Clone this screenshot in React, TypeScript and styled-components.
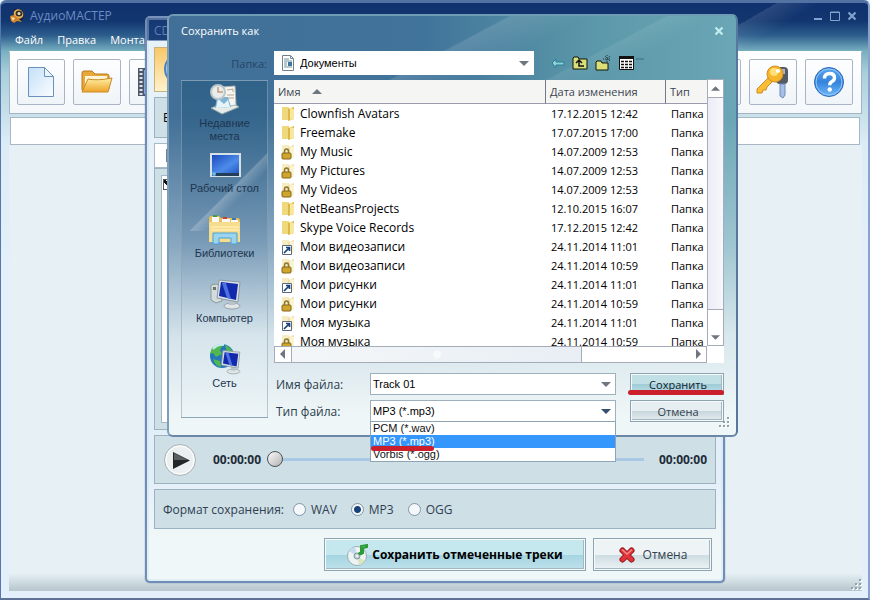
import React from "react";
import styled, { createGlobalStyle, css } from "styled-components";

const Global = createGlobalStyle`
  * { box-sizing: border-box; }
  body { margin: 0; background: #e4f0fa; }
  body, button, input, select, table { font-family: "Open Sans", "Noto Sans", sans-serif; font-size: 12px; }
`;

const AppWindow = styled.div`
  position: relative;
  display: flex;
  flex-direction: column;
  min-height: 100vh;
  padding: 0 6px 7px 8px;
  overflow: hidden;
  border: 1px solid #5577ae;
  border-top: 3px solid #5272a4;
  border-right: 2px solid #8ba0cc;
  border-bottom: 2px solid #5f7296;
  border-radius: 6px 6px 0 0;
  background:
    linear-gradient(150deg, transparent 0 46%, rgba(255,255,255,.1) 46% 47%, transparent 60%) right top / 240px 48px no-repeat,
    linear-gradient(#10316f 0, #12366f 18px, #2b5c8c 32px, #78afc0 48px, #a9d0da 70px, #dcecf6 140px, #e3f0fb 260px);
`;
const TitleBar = styled.header`
  display: flex;
  align-items: center;
  gap: 5px;
  height: 25px;
  padding-right: 3px;
  color: #6b8cc4;
`;
const WindowTitle = styled.span`flex: 1;`;
const CaptionButton = styled.button`
  display: flex;
  width: 12px;
  padding: 0;
  border: 0;
  background: none;
  color: #83a2cd;
`;
const MenuBar = styled.nav`
  display: flex;
  gap: 14px;
  height: 23px;
  padding-left: 6px;
  align-items: center;
`;
const MenuItem = styled.button`
  padding: 0;
  border: 0;
  background: none;
  color: #fff;
  font-size: 11px;
`;
const Toolbar = styled.div`
  display: flex;
  gap: 8px;
  padding: 7px 8px 8px 7px;
  border: 1px solid #a5b4c2;
  border-top-color: #fff;
  background: linear-gradient(#fff, #f4f8fb);
`;
const ToolButton = styled.button`
  display: flex;
  align-items: center;
  justify-content: center;
  width: 48px;
  height: 46px;
  padding: 0;
  border: 1px solid #aab4c4;
  border-radius: 2px;
  background: linear-gradient(#fdfeff, #eff4f8);
`;
const Spacer = styled.div`flex: 1;`;
const TrackBar = styled.div`
  height: 28px;
  margin: 3px 2px 0 1px;
  border: 1px solid #a9b6c3;
  background: #fff;
`;
const Workspace = styled.main`
  flex: 1;
  background: #e7f1f5;
`;
const StatusBar = styled.footer`
  display: flex;
  justify-content: flex-end;
  align-items: flex-end;
  height: 18px;
  background: linear-gradient(#e7f1f5, #b6c6cc);
`;

const RipDialog = styled.section`
  position: absolute;
  left: 144px;
  right: 143px;
  top: 13px;
  padding: 0 7px 10px;
  border: 2px solid #6f8db6;
  border-top-color: #7892bb;
  border-radius: 5px;
  background: linear-gradient(#153873 0, #1b4078 22px, #e6f1f8 23px, #e3eff8 460px, #f0f7f8 520px);
  box-shadow: inset 0 0 0 2px rgba(200, 222, 240, .35), 0 0 1px #24446e;
`;
const RipTitle = styled.h2`
  height: 25px;
  margin: 0;
  color: #5d80b8;
  font-size: 12px;
  font-weight: 400;
  line-height: 25px;
`;
const Banner = styled.div`
  height: 45px;
  margin-top: 4px;
  border: 1px solid #c8b27c;
  background: linear-gradient(#f8c868, #fff2cc);
`;
const panel = css`
  border: 1px solid #9bb2c3;
  background: #cfdfe6;
`;
const DrivePanel = styled.div`
  ${panel}
  height: 41px;
  margin-top: 5px;
  padding: 11px 8px;
`;
const TabStrip = styled.div`
  height: 25px;
  margin-top: 5px;
  padding: 5px 11px;
  border: 1px solid #a9bac6;
  background: #fff;
`;
const TrackList = styled.div`
  ${panel}
  height: 262px;
  padding: 6px;
`;
const TrackSheet = styled.div`
  height: 248px;
  border: 1px solid #a6b7c4;
  background: #fff;
`;
const Check = styled.input`
  appearance: none;
  display: block;
  width: 11px;
  height: 11px;
  margin: 3px 1px;
  border: 1px solid #555;
  background: #fff linear-gradient(45deg, transparent 35%, #111 36% 60%, transparent 61%);
`;
const Player = styled.div`
  ${panel}
  display: flex;
  align-items: center;
  height: 49px;
  margin-top: 5px;
  padding: 0 8px;
  color: #1d2c38;
  font-weight: 700;
`;
const PlayButton = styled.button`
  display: flex;
  width: 34px;
  height: 34px;
  margin-right: 16px;
  padding: 0;
  border: 0;
  background: none;
`;
const Seek = styled.input`
  flex: 1;
  height: 18px;
  margin: 0 15px 0 6px;
  appearance: none;
  background: none;
  &::-webkit-slider-runnable-track {
    height: 3px;
    background: #a9c8e3;
  }
  &::-webkit-slider-thumb {
    appearance: none;
    width: 16px;
    height: 16px;
    margin-top: -7px;
    border: 1px solid #4d5255;
    border-radius: 50%;
    background: linear-gradient(135deg, #fafafa, #b3b3b3);
  }
`;
const FormatGroup = styled.div`
  ${panel}
  display: flex;
  align-items: center;
  height: 40px;
  margin-top: 5px;
  padding: 0 8px;
  color: #2e4152;
`;
const FormatTitle = styled.span`
  margin-right: 9px;
`;
const RadioLabel = styled.label`
  display: flex;
  align-items: center;
  gap: 5px;
  margin-right: 14px;
`;
const Radio = styled.input`
  appearance: none;
  width: 13px;
  height: 13px;
  margin: 0;
  border: 1px solid #7f96a8;
  border-radius: 50%;
  background: #f4f8fa;
  &:checked { background: radial-gradient(circle, #16437c 0 3px, #f4f8fa 4px); }
`;
const RipActions = styled.div`
  display: flex;
  justify-content: flex-end;
  gap: 7px;
  padding: 9px 4px 0 0;
`;
const raised = css`
  border: 1px solid #8fa4b1;
  box-shadow: inset 0 0 0 1px #f4fafc, inset -2px -2px 0 #a5b8c2;
`;
const ActionButton = styled.button<{ $primary?: boolean }>`
  ${raised}
  display: flex;
  align-items: center;
  justify-content: center;
  gap: ${p => (p.$primary ? 3 : 7)}px;
  width: ${p => (p.$primary ? 262 : 119)}px;
  height: 33px;
  padding: 0;
  background: ${p => p.$primary
    ? "linear-gradient(#c5e8ef 0 50%, #a4d5e1 51%, #bfe1eb)"
    : "linear-gradient(#eef4f6 0 50%, #cddce1 51%, #edf4f6)"};
  color: ${p => (p.$primary ? "#000" : "#33424d")};
  font-weight: ${p => (p.$primary ? 700 : 400)};
`;

const SaveDialog = styled.section`
  position: absolute;
  left: 166px;
  right: 130px;
  top: 11px;
  display: flex;
  flex-direction: column;
  padding: 0 12px 13px 11px;
  border: 2px solid #7e9fba;
  border-top-color: #6e9cb4;
  border-right-color: #57789e;
  border-bottom-color: #6b87a8;
  border-radius: 6px;
  background:
    linear-gradient(152deg, transparent 0 22%, rgba(255,255,255,.12) 22.5%, transparent 31%, transparent 40%, rgba(255,255,255,.08) 40.5%, transparent 46%) right top / 420px 240px no-repeat,
    linear-gradient(rgba(231,241,246,0) 0, rgba(231,241,246,0) 100px, rgba(225,238,243,.45) 230px, rgba(228,239,243,.9) 320px, #eff6f7 400px),
    linear-gradient(90deg, #416f97 0, #41749a 45%, #5b98a9 75%, #6aa6b5);
`;
const SaveTitle = styled.header`
  display: flex;
  align-items: center;
  height: 35px;
  padding: 0 0 6px 1px;
  color: #fff;
  font-size: 11px;
`;
const CloseButton = styled(CaptionButton)`
  margin-right: -2px;
  color: #c1edf0;
`;
const FolderRow = styled.div`
  display: flex;
  align-items: center;
  gap: 7px;
  height: 24px;
  margin-bottom: 5px;
`;
const FolderLabel = styled.label`
  width: 87px;
  color: #254567;
  font-size: 11px;
  text-align: right;
`;
const SelectBox = styled.div<{ $folder?: boolean }>`
  position: relative;
  display: flex;
  flex: 1;
  align-items: center;
  gap: 4px;
  height: ${p => (p.$folder ? 24 : 22)}px;
  border: 1px solid ${p => (p.$folder ? "#fff" : "#9fb0bd")};
  background: #fff;
  padding: 0 4px 0 ${p => (p.$folder ? 5 : 2)}px;
`;
const fieldText = css`
  flex: 1;
  min-width: 0;
  padding: 0;
  border: 0;
  outline: 0;
  appearance: none;
  background: none;
  color: #000;
  font-family: "Liberation Sans", sans-serif;
  font-size: 11px;
`;
const Select = styled.select`${fieldText}`;
const FileInput = styled.input`${fieldText}`;
const FolderTools = styled.div`
  display: flex;
  gap: 7px;
  width: 183px;
  padding-left: 10px;
`;
const IconButton = styled.button`
  display: flex;
  padding: 0;
  border: 0;
  background: none;
`;
const SaveBody = styled.div`
  display: flex;
  gap: 6px;
`;
const Places = styled.nav`
  width: 87px;
  height: 338px;
  margin-left: 1px;
  padding-top: 2px;
  border: 1px solid rgba(143, 166, 184, .6);
  background:
    linear-gradient(135deg, transparent 66%, rgba(255,255,255,.22) 67%, transparent 74%) left top / 87px 150px no-repeat,
    linear-gradient(rgba(33,85,122,.5), rgba(70,110,150,.25) 45%, rgba(225,238,243,.2) 75%);
`;
const Place = styled.button`
  display: flex;
  flex-direction: column;
  align-items: center;
  gap: 2px;
  width: 100%;
  height: 65px;
  padding: 0 5px;
  border: 0;
  background: none;
  color: #1d3550;
  font-family: "Liberation Sans", sans-serif;
  font-size: 11px;
  line-height: 13px;
`;
const SaveMain = styled.div`
  flex: 1;
  min-width: 0;
`;
const FileView = styled.div`
  display: grid;
  grid-template-columns: minmax(0, 1fr) 17px;
  grid-template-rows: 266px 17px;
  background: #fff;
`;
const FileViewport = styled.div`overflow: hidden;`;
const FileTable = styled.table`
  width: 520px;
  table-layout: fixed;
  border-collapse: separate;
  border-spacing: 0;
  color: #000;
  white-space: nowrap;
`;
const HeadCell = styled.th<{ $w: number }>`
  width: ${p => p.$w}px;
  height: 24px;
  padding: 0 4px;
  border-bottom: 1px solid #9a9cae;
  border-right: 1px solid #77778c;
  background: #f5f5f3;
  color: #3c4450;
  font-size: 11px;
  font-weight: 400;
  text-align: left;
`;
const SortLabel = styled.span`
  display: flex;
  align-items: center;
  gap: 11px;
`;
const Cell = styled.td<{ $small?: boolean }>`
  height: 19px;
  padding: 0 5px 0 ${p => (p.$small ? 5 : 7)}px;
  font-size: ${p => (p.$small ? 11 : 12)}px;
  line-height: 18px;
`;
const FileName = styled.span`
  display: flex;
  align-items: center;
  gap: 3px;
`;
const VScroll = styled.div`
  display: flex;
  flex-direction: column;
  justify-content: space-between;
  border: 1px solid #a4acc0;
  border-top: 0;
  background: linear-gradient(90deg, #e9edf5, #f7f8fc);
`;
const HScroll = styled.div`
  display: flex;
  justify-content: space-between;
  border: 1px solid #a4acb8;
  background: radial-gradient(circle at 162px 50%, rgba(255,255,255,.6) 0 3px, transparent 5px), linear-gradient(90deg, #f4f7f9, #e4ebf3);
`;
const ScrollButton = styled.button<{ $w: number; $h: number }>`
  display: flex;
  align-items: flex-end;
  justify-content: flex-end;
  width: ${p => p.$w}px;
  height: ${p => p.$h}px;
  padding: 3px;
  border: 0;
  outline: 1px solid #a4acb8;
  background: #fff;
`;
const FormRows = styled.div`
  display: grid;
  grid-template-columns: 89px minmax(0, 1fr) 94px;
  row-gap: 5px;
  margin-top: 10px;
  align-items: center;
`;
const FieldLabel = styled.label`
  padding-left: 2px;
  color: #2a3d4d;
`;
const FieldCell = styled.div`
  display: flex;
  padding: 0 14px 0 7px;
`;
const DialogButton = styled.button<{ $primary?: boolean }>`
  ${raised}
  position: relative;
  height: 22px;
  padding: 0 0 0 2px;
  background: ${p => p.$primary
    ? "linear-gradient(#c0e0e6 0 50%, #9fccd7 51%, #bcdfe6)"
    : "linear-gradient(#e6eef1 0 50%, #c8d6dc 51%, #e5eef1)"};
  color: ${p => (p.$primary ? "#10202c" : "#33424d")};
  font-size: 11px;
`;
const Options = styled.ul`
  position: absolute;
  left: -1px;
  right: -1px;
  top: 20px;
  margin: 0;
  padding: 0;
  border: 1px solid #8ea5b6;
  background: #fff;
  list-style: none;
  font-family: "Liberation Sans", sans-serif;
  font-size: 11px;
`;
const Option = styled.li<{ $active?: boolean }>`
  height: 13px;
  padding-left: 2px;
  overflow: hidden;
  background: ${p => (p.$active ? "#3596fb" : "#fff")};
  color: ${p => (p.$active ? "#fff" : "#111")};
  line-height: 13px;
`;
const Marker = styled.span<{ $option?: boolean }>`
  position: absolute;
  left: ${p => (p.$option ? 0 : -3)}px;
  top: ${p => (p.$option ? 24 : 16)}px;
  z-index: 1;
  width: ${p => (p.$option ? 63 : 96)}px;
  height: 5px;
  border-radius: 3px;
  background: #cb1f2c;
`;
const GripCorner = styled.div`
  position: absolute;
  right: 6px;
  bottom: 6px;
  display: flex;
`;

const Arrow = ({ dir = "down", color = "#6f7680" }: { dir?: "up" | "down" | "left" | "right"; color?: string }) => {
  const d = { down: "M0 3h10l-5 5z", up: "M0 7h10l-5-5z", left: "M7 0v10l-5-5z", right: "M3 0v10l5-5z" }[dir];
  return <svg width="10" height="10" viewBox="0 0 10 10"><path d={d} fill={color} /></svg>;
};
const Grip = () => (
  <svg width="12" height="12" viewBox="0 0 12 12">
    {[[9, 0], [5, 4], [9, 4], [1, 8], [5, 8], [9, 8]].map(([x, y]) => (
      <g key={`${x}-${y}`}><rect x={x + 1} y={y + 1} width="2" height="2" fill="#fff" /><rect x={x} y={y} width="2" height="2" fill="#93a3ae" /></g>
    ))}
  </svg>
);
const Cross = () => (
  <svg width="10" height="10" viewBox="0 0 10 10"><path d="M1.5 1.5l7 7m0-7l-7 7" stroke="currentColor" strokeWidth="2.2" /></svg>
);
const AppIcon = () => (
  <svg width="16" height="16" viewBox="0 0 16 16">
    <path d="M5 1l8 1 2 5-2 6-5-3-4-4z" fill="#20242c" />
    <ellipse cx="9.5" cy="6" rx="5" ry="4.5" transform="rotate(40 9.5 6)" fill="#eab25c" />
    <ellipse cx="10" cy="5.5" rx="3.4" ry="3" fill="#343026" /><circle cx="10" cy="5.5" r="1.5" fill="#f0e0ba" />
    <path d="M1 8l4-1 4 3 4 4-5-1-3 2-3-2z" fill="#d2842a" /><path d="M2 9l4 1-2 3z" fill="#ffe4a6" />
  </svg>
);
const NewIcon = () => (
  <svg width="28" height="32" viewBox="0 0 28 32">
    <defs><linearGradient id="sheet" x1="0" y1="0" x2="1" y2="1"><stop stopColor="#c4e0f8" /><stop offset="1" stopColor="#fbfdff" /></linearGradient></defs>
    <path d="M1.500 1.500h16l9 9v20h-25z" fill="url(#sheet)" stroke="#6b91bb" /><path d="M17.500 1.500v9h9z" fill="#eaf5ff" stroke="#6b91bb" />
  </svg>
);
const OpenIcon = () => (
  <svg width="34" height="26" viewBox="0 0 34 26">
    <defs><linearGradient id="flap" x2="0" y2="1"><stop stopColor="#fff0a8" /><stop offset="1" stopColor="#eea326" /></linearGradient></defs>
    <path d="M2 21V4q0-2 2-2h8l3 3h12q2 0 2 2v13z" fill="#e8a93c" stroke="#bc7a1c" /><path d="M5 7h22v9H5z" fill="#fff6d8" />
    <path d="M8 10q9 2 24-1l-4 14H2z" fill="url(#flap)" stroke="#cb8a25" />
  </svg>
);
const FilmIcon = () => (
  <svg width="30" height="30" viewBox="0 0 30 30">
    <path d="M0 1h30v28H0z" fill="#4e5868" /><path d="M6 3h18v24H6z" fill="#88b6e3" />
    <path d="M3 2v27M27 2v27" stroke="#dbe4ee" strokeWidth="3" strokeDasharray="2 2" />
  </svg>
);
const KeysIcon = () => (
  <svg width="34" height="34" viewBox="0 0 34 34">
    <rect x="20" y="2" width="12" height="17" rx="4" fill="#545b66" /><rect x="23" y="4" width="6" height="5" fill="#aeb6c2" />
    <path d="M24 19h5v11l-2 3-3-2z" fill="#a6bfea" stroke="#7188b7" />
    <path d="M14 11L1 24v4h5l1-3h3l1-3 6-6z" fill="#f9bd38" stroke="#cf8c20" />
    <circle cx="19" cy="9" r="8" fill="#f7b52c" stroke="#d08e24" /><circle cx="18" cy="7" r="4" fill="#ffe07a" /><circle cx="22" cy="6" r="2" fill="#fff" />
  </svg>
);
const HelpIcon = () => (
  <svg width="32" height="32" viewBox="0 0 32 32">
    <defs><linearGradient id="help" x2="0" y2="1"><stop stopColor="#5ba7ee" /><stop offset=".5" stopColor="#3484dd" /><stop offset="1" stopColor="#6fb8f8" /></linearGradient></defs>
    <circle cx="16" cy="16" r="14.500" fill="url(#help)" stroke="#2a67ba" /><circle cx="16" cy="16" r="13" fill="none" stroke="#93c6f6" />
    <path d="M11.500 12.500q0-5 5-5 5 0 5 4.200 0 2.500-2.800 4-2 1-2 3.500" fill="none" stroke="#fff" strokeWidth="3.400" /><circle cx="16.700" cy="23.500" r="2.200" fill="#fff" />
  </svg>
);
const PlayIcon = () => (
  <svg width="34" height="34" viewBox="0 0 34 34">
    <circle cx="17" cy="17" r="15.500" fill="#eceff0" stroke="#aab5bb" /><circle cx="17" cy="17" r="14" fill="none" stroke="#fff" />
    <path d="M10 9l17 8.500L10 26z" fill="#222627" /><path d="M11 10l14 7H11z" fill="#5b5f61" />
  </svg>
);
const DiscIcon = () => (
  <svg width="22" height="22" viewBox="0 0 22 22">
    <circle cx="10" cy="12" r="9.500" fill="#eef4f2" stroke="#9aaeb2" /><path d="M10 12L2 7a9 9 0 0 1 6-4z" fill="#c2dbef" /><path d="M10 12l8 5a9 9 0 0 1-6 4z" fill="#d7e5c1" />
    <circle cx="10" cy="12" r="3" fill="#bfd2d7" stroke="#8299a0" /><circle cx="10" cy="12" r="1" fill="#fff" />
    <path d="M14 9V2l6-1v2l-4 1v6" fill="none" stroke="#2b9b37" strokeWidth="2" /><ellipse cx="13.500" cy="9.500" rx="2.500" ry="1.800" fill="#2b9b37" />
  </svg>
);
const CancelIcon = () => (
  <svg width="18" height="18" viewBox="0 0 18 18">
    <path d="M4.500 4.500l9 9m0-9l-9 9" stroke="#98141a" strokeWidth="6" strokeLinecap="round" />
    <path d="M4.500 4.500l9 9m0-9l-9 9" stroke="#df353a" strokeWidth="4" strokeLinecap="round" />
    <path d="M4 3.500l5 4.500 5-4.500" stroke="#f28c8c" fill="none" strokeWidth="1.500" />
  </svg>
);
const DocumentIcon = () => (
  <svg width="16" height="16" viewBox="0 0 16 16">
    <path d="M2.500.5h8l3 3v12h-11z" fill="#fff" stroke="#71828f" /><path d="M10.500.5v3h3M4 4h5M4 6h8M4 8h3M4 10h3M4 12h8" fill="none" stroke="#71909f" /><path d="M8 7h4v4H8z" fill="#40769a" />
  </svg>
);
const RecentIcon = () => (
  <svg width="32" height="32" viewBox="0 0 32 32">
    <path d="M2 25l19-7 9 6-17 7z" fill="#e5ebe9" stroke="#94a6aa" /><path d="M13 4l13-1 1 19-12 2z" fill="#f5f6f1" stroke="#aab5b4" />
    <path d="M18 7l6-1v3M18 12h7M18 15h7" stroke="#b9a98a" fill="none" /><path d="M8 14h11l3 10-16 1z" fill="#7fb4d6" /><path d="M9 16l6 5 4-4 2 7-14 1z" fill="#e4f4f8" />
    <circle cx="9" cy="9" r="7" fill="#e9eeed" stroke="#b9c6ca" strokeWidth="2" /><path d="M9 4v5h5" fill="none" stroke="#c79a72" strokeWidth="1.500" />
  </svg>
);
const DesktopIcon = () => (
  <svg width="32" height="32" viewBox="0 0 32 32">
    <defs><linearGradient id="desk" x2="1" y2="1"><stop stopColor="#1b4bbc" /><stop offset=".6" stopColor="#4d8ceb" /><stop offset="1" stopColor="#2259c4" /></linearGradient></defs>
    <rect x="1" y="5" width="31" height="24" fill="#d6e0e7" /><rect x="3" y="7" width="27" height="18" fill="url(#desk)" /><rect x="3" y="25" width="27" height="3" fill="#233e59" /><circle cx="5" cy="26" r="2" fill="#69b8ea" />
  </svg>
);
const LibraryIcon = () => (
  <svg width="34" height="32" viewBox="0 0 34 32">
    <path d="M1 5q0-2 2-2h8l2 2h16q3 0 3 3v20H1z" fill="#e8bf5b" /><path d="M4 4h7v5H4zM14 6h8v4h-8zM23 7h7v3h-7z" fill="#fafafa" /><path d="M5 3h4" stroke="#3f9a4a" strokeWidth="2" /><path d="M15 5h4" stroke="#c2452f" strokeWidth="2" /><path d="M24 6h4" stroke="#3e77b2" strokeWidth="2" />
    <path d="M1 9h31v20H1z" fill="#f5dd8d" /><path d="M3 14h28M3 17h28" stroke="#ffe9a8" strokeWidth="2" />
    <path d="M5 20h24v11h-6v-6H11v6H5z" fill="#9ad4ef" stroke="#4aa1d3" />
  </svg>
);
const Monitor = () => (
  <g><ellipse cx="23" cy="28" rx="8" ry="3" fill="#e2e5e5" stroke="#98a4ad" /><path d="M20 21h6v6h-6z" fill="#b9c2c9" /><path d="M10 2l21 2-2 20-21-4z" fill="#d9e0e4" stroke="#8c9aa6" /><path d="M12 4l17 2-2 16-17-4z" fill="#1229ae" /><path d="M17 5l5 16-4-1-5-15z" fill="#4d71df" /></g>
);
const ComputerIcon = () => (
  <svg width="32" height="32" viewBox="0 0 32 32"><path d="M2 7l5-1 6 2v15l-6 2-5-3z" fill="#d3dbdc" stroke="#8c9999" /><path d="M4 9h3v3H4z" fill="#67756c" /><Monitor /></svg>
);
const NetworkIcon = () => (
  <svg width="32" height="32" viewBox="0 0 32 32">
    <circle cx="13" cy="13" r="12" fill="#2676ba" /><path d="M3 5q7-5 11-3l-3 5 2 4-6 3-3-4-3 1zM4 16l7 2 1 6q-6-1-8-8zM16 2q6 2 8 8l-6-1z" fill="#52b74f" /><path d="M4 6q5-5 11-4" stroke="#c7eef4" fill="none" strokeWidth="2" />
    <g transform="translate(6 6) scale(.8)"><Monitor /></g>
  </svg>
);
const BackIcon = () => <svg width="14" height="16" viewBox="0 0 14 16"><path d="M1 8l4-4v3h8v3H5v3z" fill="#8fd0d8" stroke="#257f92" /></svg>;
const UpIcon = () => <svg width="16" height="16" viewBox="0 0 16 16"><path d="M1 14V3l1-1h4l1 2h8v10z" fill="#d9df79" stroke="#101708" /><path d="M4 8l3-3 3 3M7 6v5h5" fill="none" stroke="#111" strokeWidth="1.500" /></svg>;
const NewFolderIcon = () => <svg width="16" height="16" viewBox="0 0 16 16"><path d="M1 15V7l1-1h4l1 2h6v7z" fill="#d9df79" stroke="#101708" /><path d="M12 0v7M8 4h8M10 1l5 5M15 1l-4 5" stroke="#26322f" strokeDasharray="1 1" /></svg>;
const ViewIcon = () => (
  <svg width="26" height="16" viewBox="0 0 26 16">
    <path d="M1.500 1.500h14v13h-14z" fill="#fff" stroke="#111" /><path d="M1 2.500h15" stroke="#111" strokeWidth="3" />
    <path d="M3 6.500h11M3 9.500h11M3 12.500h11" stroke="#111" strokeWidth="1.500" strokeDasharray="3 1" /><path d="M18 4h8" stroke="#456b7b" />
  </svg>
);

type Kind = "folder" | "lock" | "link";
const FileIcon = ({ kind }: { kind: Kind }) => (
  <svg width="16" height="16" viewBox="0 0 16 16">
    <g opacity={kind === "folder" ? 1 : 0.45}><path d="M1 1h7v13H1z" fill="#efd97c" /><path d="M7 3l6-2v12l-6 2z" fill="#dcb848" /><path d="M9 2l4 1v10l-4 1z" fill="#f8e89f" /></g>
    {kind === "lock" && <g><path d="M3.500 10V7.500q0-2.500 2-2.500t2 2.500V10" fill="none" stroke="#8d7830" strokeWidth="1.500" /><rect x="1" y="9" width="9" height="6" rx="1" fill="#cfa52d" stroke="#80661c" /></g>}
    {kind === "link" && <g><path d="M1.500 6.500h9v9h-9z" fill="#fff" stroke="#586a82" /><path d="M3 14l5-5M5 8.500h3.500V12" fill="none" stroke="#1a407b" strokeWidth="1.700" /></g>}
  </svg>
);

const files: { name: string; date: string; kind: Kind }[] = [
  { name: "Clownfish Avatars", date: "17.12.2015 12:42", kind: "folder" },
  { name: "Freemake", date: "17.07.2015 17:00", kind: "folder" },
  { name: "My Music", date: "14.07.2009 12:53", kind: "lock" },
  { name: "My Pictures", date: "14.07.2009 12:53", kind: "lock" },
  { name: "My Videos", date: "14.07.2009 12:53", kind: "lock" },
  { name: "NetBeansProjects", date: "12.10.2015 16:07", kind: "folder" },
  { name: "Skype Voice Records", date: "17.12.2015 12:42", kind: "folder" },
  { name: "Мои видеозаписи", date: "24.11.2014 11:01", kind: "link" },
  { name: "Мои видеозаписи", date: "24.11.2014 10:59", kind: "lock" },
  { name: "Мои рисунки", date: "24.11.2014 11:01", kind: "link" },
  { name: "Мои рисунки", date: "24.11.2014 10:59", kind: "lock" },
  { name: "Моя музыка", date: "24.11.2014 11:01", kind: "link" },
  { name: "Моя музыка", date: "24.11.2014 10:59", kind: "lock" },
];
const places = [
  { label: "Недавние места", icon: <RecentIcon /> },
  { label: "Рабочий стол", icon: <DesktopIcon /> },
  { label: "Библиотеки", icon: <LibraryIcon /> },
  { label: "Компьютер", icon: <ComputerIcon /> },
  { label: "Сеть", icon: <NetworkIcon /> },
];

export default function App() {
  return (
    <AppWindow>
      <Global />
      <TitleBar>
        <AppIcon />
        <WindowTitle>АудиоМАСТЕР</WindowTitle>
        <CaptionButton aria-label="Свернуть"><svg width="10" height="10" viewBox="0 0 10 10"><path d="M1 8h8" stroke="currentColor" strokeWidth="2" /></svg></CaptionButton>
        <CaptionButton aria-label="Развернуть"><svg width="10" height="10" viewBox="0 0 10 10"><path d="M.5 1v8.500h9V1zM0 1.500h10" fill="none" stroke="currentColor" /></svg></CaptionButton>
        <CaptionButton aria-label="Закрыть"><Cross /></CaptionButton>
      </TitleBar>
      <MenuBar>
        <MenuItem>Файл</MenuItem><MenuItem>Правка</MenuItem><MenuItem>Монтаж</MenuItem>
      </MenuBar>
      <Toolbar>
        <ToolButton aria-label="Новый"><NewIcon /></ToolButton>
        <ToolButton aria-label="Открыть"><OpenIcon /></ToolButton>
        <ToolButton aria-label="Видео"><FilmIcon /></ToolButton>
        <Spacer />
        <ToolButton aria-label="Инструмент" />
        <ToolButton aria-label="Регистрация"><KeysIcon /></ToolButton>
        <ToolButton aria-label="Справка"><HelpIcon /></ToolButton>
      </Toolbar>
      <TrackBar />
      <Workspace />
      <StatusBar><Grip /></StatusBar>

      <RipDialog>
        <RipTitle>CD</RipTitle>
        <Banner><svg width="40" height="43" viewBox="0 0 40 43"><circle cx="25" cy="21" r="15" fill="#9ecbf0" stroke="#4b83bc" strokeWidth="2" /></svg></Banner>
        <DrivePanel>В</DrivePanel>
        <TabStrip><svg width="14" height="14" viewBox="0 0 14 14"><path d="M0 0h14v13H0z" fill="#6f7f95" /></svg></TabStrip>
        <TrackList><TrackSheet><Check type="checkbox" defaultChecked aria-label="Track 01" /></TrackSheet></TrackList>
        <Player>
          <PlayButton aria-label="Воспроизвести"><PlayIcon /></PlayButton>
          <span>00:00:00</span>
          <Seek type="range" min="0" max="100" defaultValue="0" aria-label="Позиция" />
          <span>00:00:00</span>
        </Player>
        <FormatGroup role="radiogroup" aria-labelledby="format-title">
          <FormatTitle id="format-title">Формат сохранения:</FormatTitle>
          {["WAV", "MP3", "OGG"].map(f => (
            <RadioLabel key={f}><Radio type="radio" name="format" defaultChecked={f === "MP3"} />{f}</RadioLabel>
          ))}
        </FormatGroup>
        <RipActions>
          <ActionButton $primary><DiscIcon />Сохранить отмеченные треки</ActionButton>
          <ActionButton><CancelIcon />Отмена</ActionButton>
        </RipActions>
      </RipDialog>

      <SaveDialog role="dialog" aria-labelledby="save-title">
        <SaveTitle><WindowTitle id="save-title">Сохранить как</WindowTitle><CloseButton aria-label="Закрыть"><Cross /></CloseButton></SaveTitle>
        <FolderRow>
          <FolderLabel htmlFor="folder">Папка:</FolderLabel>
          <SelectBox $folder><DocumentIcon /><Select id="folder"><option>Документы</option></Select><Arrow /></SelectBox>
          <FolderTools>
            <IconButton aria-label="Назад"><BackIcon /></IconButton>
            <IconButton aria-label="Вверх"><UpIcon /></IconButton>
            <IconButton aria-label="Новая папка"><NewFolderIcon /></IconButton>
            <IconButton aria-label="Вид"><ViewIcon /></IconButton>
          </FolderTools>
        </FolderRow>
        <SaveBody>
          <Places>{places.map(p => <Place key={p.label}>{p.icon}<span>{p.label}</span></Place>)}</Places>
          <SaveMain>
            <FileView>
              <FileViewport>
                <FileTable>
                  <thead><tr><HeadCell $w={272}><SortLabel>Имя<Arrow dir="up" /></SortLabel></HeadCell><HeadCell $w={120}>Дата изменения</HeadCell><HeadCell $w={128}>Тип</HeadCell></tr></thead>
                  <tbody>
                    {files.map(f => (
                      <tr key={f.name + f.kind}><Cell><FileName><FileIcon kind={f.kind} />{f.name}</FileName></Cell><Cell $small>{f.date}</Cell><Cell $small>Папка</Cell></tr>
                    ))}
                  </tbody>
                </FileTable>
              </FileViewport>
              <VScroll><ScrollButton $w={15} $h={17} aria-label="Вверх"><Arrow dir="up" /></ScrollButton><ScrollButton $w={15} $h={35} aria-label="Вниз"><Arrow /></ScrollButton></VScroll>
              <HScroll><ScrollButton $w={16} $h={15} aria-label="Влево"><Arrow dir="left" /></ScrollButton><ScrollButton $w={124} $h={15} aria-label="Вправо"><Arrow dir="right" /></ScrollButton></HScroll>
            </FileView>
            <FormRows>
              <FieldLabel htmlFor="file-name">Имя файла:</FieldLabel>
              <FieldCell><SelectBox><FileInput id="file-name" defaultValue="Track 01" /><Arrow /></SelectBox></FieldCell>
              <DialogButton $primary>Сохранить<Marker /></DialogButton>
              <FieldLabel htmlFor="file-type">Тип файла:</FieldLabel>
              <FieldCell>
                <SelectBox>
                  <Select id="file-type" defaultValue="MP3 (*.mp3)"><option>PCM (*.wav)</option><option>MP3 (*.mp3)</option><option>Vorbis (*.ogg)</option></Select>
                  <Arrow color="#34506d" />
                  <Options role="listbox"><Option role="option">PCM (*.wav)</Option><Option role="option" $active>MP3 (*.mp3)</Option><Option role="option">Vorbis (*.ogg)</Option><Marker $option /></Options>
                </SelectBox>
              </FieldCell>
              <DialogButton>Отмена</DialogButton>
            </FormRows>
          </SaveMain>
        </SaveBody>
        <GripCorner><Grip /></GripCorner>
      </SaveDialog>
    </AppWindow>
  );
}
